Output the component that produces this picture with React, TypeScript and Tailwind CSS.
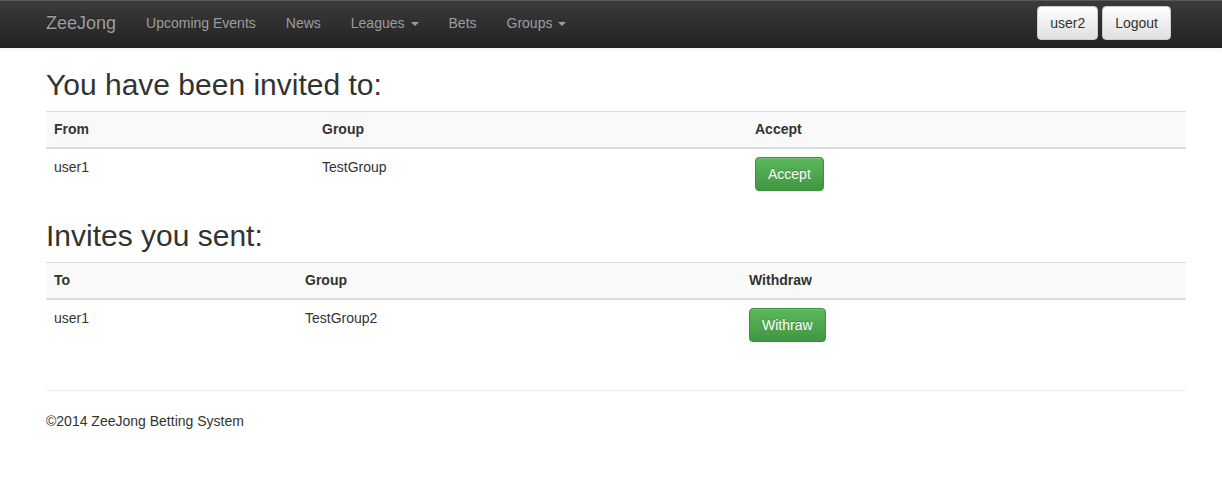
import React from 'react'

const Caret = () => (
  <span className="ml-[6px] inline-block h-0 w-0 border-x-4 border-t-4 border-x-transparent border-t-current align-middle" />
)

function NavLink({ label, caret }: { label: string; caret?: boolean }) {
  return (
    <a className="block px-[15px] py-[13px] leading-5 text-[#9d9d9d]">
      {label}
      {caret && <Caret />}
    </a>
  )
}

function GreenButton({ label }: { label: string }) {
  return (
    <button
      type="button"
      className="rounded border border-[#3e8f3e] bg-gradient-to-b from-[#5cb85c] to-[#419641] px-3 py-[6px] text-sm leading-5 text-white [text-shadow:0_-1px_0_rgba(0,0,0,0.2)] shadow-[inset_0_1px_0_rgba(255,255,255,0.15),0_1px_1px_rgba(0,0,0,0.075)]"
    >
      {label}
    </button>
  )
}

interface Row {
  a: string
  b: string
  action: string
}

function InviteTable({
  headers,
  widths,
  rows,
}: {
  headers: string[]
  widths: string[]
  rows: Row[]
}) {
  return (
    <table className="mb-5 w-full border-collapse text-sm">
      <thead>
        <tr className="bg-[#f9f9f9]">
          {headers.map((h, i) => (
            <th
              key={h}
              className={`border-t border-b-2 border-[#ddd] px-2 pb-2 pt-[7px] text-left align-bottom font-bold leading-5 ${widths[i] ?? ''}`}
            >
              {h}
            </th>
          ))}
        </tr>
      </thead>
      <tbody>
        {rows.map((r) => (
          <tr key={r.a + r.b}>
            <td className="border-t border-[#ddd] p-2 align-top leading-5">{r.a}</td>
            <td className="border-t border-[#ddd] p-2 align-top leading-5">{r.b}</td>
            <td className="border-t border-[#ddd] p-2 align-top leading-5">
              <GreenButton label={r.action} />
            </td>
          </tr>
        ))}
      </tbody>
    </table>
  )
}

export default function App() {
  return (
    <div className="min-h-[482px] bg-white text-sm text-[#333] [font-family:'Liberation_Sans',Arial,sans-serif]">
      <nav className="h-[48px] bg-gradient-to-b from-[#3c3c3c] to-[#222] shadow-[inset_0_1px_0_rgba(255,255,255,0.15),0_1px_5px_rgba(0,0,0,0.075)]">
        <div className="ml-[46px] flex h-full w-[1140px] items-start">
          <a className="block py-[13px] pr-[15px] text-lg leading-5 text-[#9d9d9d] [text-shadow:0_-1px_0_rgba(0,0,0,0.25)]">
            ZeeJong
          </a>
          <div className="flex">
            <NavLink label="Upcoming Events" />
            <NavLink label="News" />
            <NavLink label="Leagues" caret />
            <NavLink label="Bets" />
            <NavLink label="Groups" caret />
          </div>
          <div className="ml-auto mr-[15px] mt-[6px] flex gap-1">
            <button
              type="button"
              className="rounded border border-[#ccc] bg-gradient-to-b from-white to-[#e0e0e0] px-3 py-[6px] text-sm leading-5 text-[#333]"
            >
              user2
            </button>
            <button
              type="button"
              className="rounded border border-[#ccc] bg-gradient-to-b from-white to-[#e0e0e0] px-3 py-[6px] text-sm leading-5 text-[#333]"
            >
              Logout
            </button>
          </div>
        </div>
      </nav>

      <div className="ml-[46px] w-[1140px] pb-10">
        <h2 className="mb-[10px] mt-5 text-[30px] font-medium leading-[1.1]">You have been invited to:</h2>
        <InviteTable
          headers={['From', 'Group', 'Accept']}
          widths={['w-[268px]', 'w-[433px]', '']}
          rows={[{ a: 'user1', b: 'TestGroup', action: 'Accept' }]}
        />

        <h2 className="mb-[10px] mt-5 text-[30px] font-medium leading-[1.1]">Invites you sent:</h2>
        <InviteTable
          headers={['To', 'Group', 'Withdraw']}
          widths={['w-[251px]', 'w-[444px]', '']}
          rows={[{ a: 'user1', b: 'TestGroup2', action: 'Withraw' }]}
        />

        <hr className="mb-5 mt-10 border-t border-[#eee]" />
        <footer>
          <p className="leading-5">©2014 ZeeJong Betting System</p>
        </footer>
      </div>
    </div>
  )
}
